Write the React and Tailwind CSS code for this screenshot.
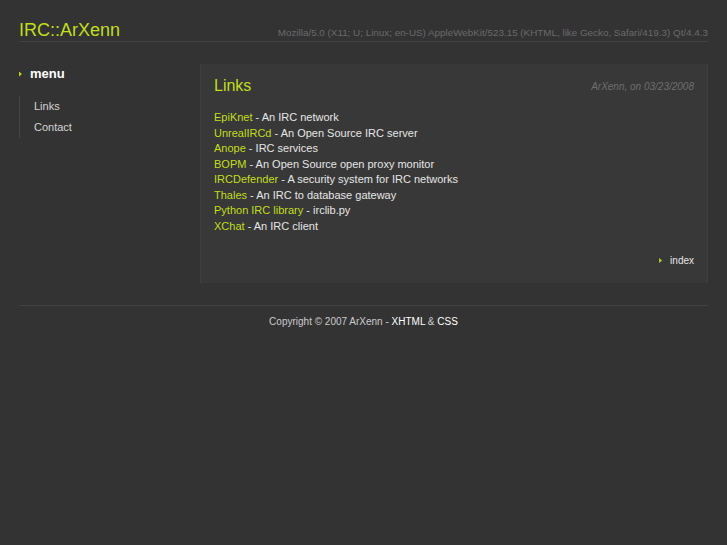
const links = [
  { name: "EpiKnet", text: "An IRC network" },
  { name: "UnrealIRCd", text: "An Open Source IRC server" },
  { name: "Anope", text: "IRC services" },
  { name: "BOPM", text: "An Open Source open proxy monitor" },
  { name: "IRCDefender", text: "A security system for IRC networks" },
  { name: "Thales", text: "An IRC to database gateway" },
  { name: "Python IRC library", text: "irclib.py" },
  { name: "XChat", text: "An IRC client" },
];

const Arrow = () => (
  <span className="inline-block w-[3px] h-[5px] bg-[#b8d41c] [clip-path:polygon(0_0,100%_50%,0_100%)]" />
);

const App = () => {
  return (
    <div className="min-h-[545px] bg-[#333333] font-['Liberation_Sans',Arial,sans-serif] text-[#dddddd]">
      <div className="w-[689px] ml-[19px] pt-[19px]">
        {/* Header */}
        <div className="flex items-end justify-between border-b border-[#424242]">
          <h1 className="text-[18px] leading-[22px] text-[#c2de1c]">IRC::ArXenn</h1>
          <span className="text-[9.85px] leading-[14px] text-[#6a6a6a] pb-[1px]">
            Mozilla/5.0 (X11; U; Linux; en-US) AppleWebKit/523.15 (KHTML, like Gecko, Safari/419.3) Qt/4.4.3
          </span>
        </div>

        <div className="flex mt-[22px]">
          {/* Sidebar */}
          <div className="w-[181px] shrink-0 pt-[2px]">
            <div className="flex items-center gap-[8px] h-[16px]">
              <Arrow />
              <span className="text-[13px] font-bold text-white">menu</span>
            </div>
            <ul className="mt-[14px] border-l border-[#444444] pl-[14px] text-[11px] text-[#d4d4d4]">
              <li className="leading-[21px]">Links</li>
              <li className="leading-[21px]">Contact</li>
            </ul>
          </div>

          {/* Main panel */}
          <div className="flex-1 bg-[#383838] border-x border-[#3f3f3f] px-[13px] pt-[12px] pb-[15px]">
            <div className="flex items-center justify-between">
              <h2 className="text-[16px] leading-[20px] text-[#c2de1c]">Links</h2>
              <span className="text-[10px] italic text-[#6e6e6e]">ArXenn, on 03/23/2008</span>
            </div>
            <ul className="mt-[14px] text-[11px] leading-[15.5px] text-[#e6e6e6]">
              {links.map((item) => (
                <li key={item.name}>
                  <span className="text-[#c2de1c]">{item.name}</span> - {item.text}
                </li>
              ))}
            </ul>
            <div className="flex items-center justify-end gap-[8px] mt-[19px] text-[10px] text-[#e6e6e6]">
              <Arrow />
              <span>index</span>
            </div>
          </div>
        </div>

        {/* Footer */}
        <div className="mt-[22px] border-t border-[#424242] pt-[8px] text-center text-[10px] text-[#cccccc]">
          Copyright © 2007 ArXenn - <span className="text-white">XHTML</span> &amp;{" "}
          <span className="text-white">CSS</span>
        </div>
      </div>
    </div>
  );
};

export default App;
